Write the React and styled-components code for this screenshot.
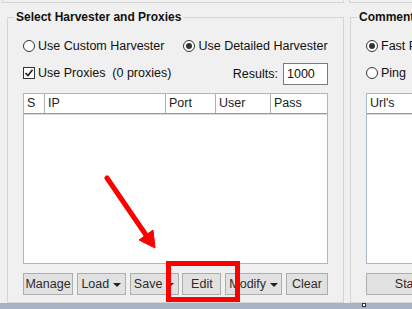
import React from 'react';
import styled, { createGlobalStyle } from 'styled-components';

const GlobalStyle = createGlobalStyle`
  html, body {
    margin: 0;
    padding: 0;
    background: #f0f0f0;
  }
  * {
    box-sizing: border-box;
  }
`;

const Window = styled.div`
  position: relative;
  width: 412px;
  height: 309px;
  overflow: hidden;
  display: flex;
  flex-direction: column;
  background: #f0f0f0;
  font-family: "Liberation Sans", Arial, sans-serif;
  font-size: 12.5px;
  color: #111;
`;

const TopStrip = styled.div`
  display: flex;
  height: 3px;
  flex: none;
`;

const LeftStub = styled.div`
  width: 342px;
  margin-left: 2px;
  border: 1px solid #d4d4d4;
  border-top: none;
`;

const RightStub = styled.div`
  flex: 1;
  margin-left: 5px;
  border-left: 1px solid #d4d4d4;
  border-bottom: 1px solid #d4d4d4;
`;

const Main = styled.div`
  flex: 1;
  display: flex;
  align-items: flex-start;
  padding: 7px 0 0 7px;
  overflow: hidden;
`;

const Group = styled.fieldset`
  flex: none;
  width: ${p => p.$width}px;
  height: 293px;
  margin: 0 0 0 ${p => p.$offset || 0}px;
  padding: 0 15px 0 15px;
  border: 1px solid #d5d5d5;
  display: flex;
  flex-direction: column;
  min-width: 0;
`;

const Legend = styled.legend`
  margin-left: -9px;
  padding: 0 2px;
  font-weight: bold;
  font-size: 12px;
  line-height: 14px;
  white-space: nowrap;
  color: #111;
`;

const OptionRow = styled.div`
  display: flex;
  align-items: center;
  height: ${p => p.$height || 14}px;
  margin-top: ${p => p.$top}px;
  gap: ${p => p.$gap || 0}px;
  white-space: pre;
`;

const Option = styled.label`
  display: flex;
  align-items: center;
  gap: 3px;
  line-height: 14px;
  margin-top: ${p => p.$shift || 0}px;
`;

const RadioDot = styled.span`
  width: 12px;
  height: 12px;
  border-radius: 50%;
  border: 1px solid #333;
  background: #fff;
  display: flex;
  align-items: center;
  justify-content: center;
  flex: none;
  &::after {
    content: '';
    width: 6px;
    height: 6px;
    border-radius: 50%;
    background: ${p => (p.$checked ? '#333' : 'transparent')};
  }
`;

const CheckBox = styled.span`
  width: 12px;
  height: 12px;
  border: 1px solid #333;
  background: #fff;
  flex: none;
  display: flex;
  align-items: center;
  justify-content: center;
`;

const Results = styled.div`
  margin-left: auto;
  display: flex;
  align-items: center;
  gap: 5px;
`;

const NumberBox = styled.div`
  width: 45px;
  height: 22px;
  border: 1px solid #7a7a7a;
  background: #fff;
  padding-left: 3px;
  line-height: 20px;
`;

const Table = styled.div`
  height: 171px;
  margin-top: 8px;
  border: 1px solid #a9b8c9;
  background: #fff;
  display: flex;
  flex-direction: column;
`;

const HeaderRow = styled.div`
  display: flex;
  height: 20px;
  border-bottom: 1px solid #9a9a9a;
  box-shadow: 0 1px 0 #d9d9d9;
`;

const HeaderCell = styled.div`
  width: ${p => (p.$w ? `${p.$w}px` : 'auto')};
  flex: ${p => (p.$w ? 'none' : 1)};
  border-right: 1px solid ${p => (p.$last ? 'transparent' : '#b0b0b0')};
  padding-left: 3px;
  line-height: 19px;
  white-space: nowrap;
  color: #222;
`;

const ButtonBar = styled.div`
  display: flex;
  justify-content: space-between;
  margin-top: 9px;
  height: 22px;
`;

const Button = styled.div`
  width: ${p => p.$w}px;
  flex: none;
  height: 22px;
  border: 1px solid #adadad;
  background: #e1e1e1;
  display: flex;
  align-items: center;
  justify-content: center;
  gap: 4px;
  color: #2b2b2b;
  white-space: nowrap;
`;

const Caret = styled.span`
  width: 0;
  height: 0;
  border-left: 4px solid transparent;
  border-right: 4px solid transparent;
  border-top: 4px solid #222;
  margin-top: 1px;
`;

const BottomBar = styled.div`
  flex: none;
  height: 6px;
  background: #a7b3c3;
  display: flex;
`;

const Grip = styled.span`
  width: 4px;
  height: 4px;
  margin-left: 362px;
  background: #fff;
  border: 1px solid #333;
`;

const Annotation = styled.svg`
  position: absolute;
  left: 0;
  top: 0;
  pointer-events: none;
`;

const Check = () => (
  <svg width="10" height="10" viewBox="0 0 10 10">
    <path d="M1.5 5 L4 7.5 L8.5 1.8" fill="none" stroke="#222" strokeWidth="1.6" />
  </svg>
);

const proxyColumns = [
  { name: 'S', w: 21 },
  { name: 'IP', w: 121 },
  { name: 'Port', w: 50 },
  { name: 'User', w: 55 },
  { name: 'Pass', last: true },
];

const proxyButtons = [
  { name: 'Manage', w: 50 },
  { name: 'Load', w: 49, menu: true },
  { name: 'Save', w: 49, menu: true },
  { name: 'Edit', w: 39 },
  { name: 'Modify', w: 57, menu: true },
  { name: 'Clear', w: 42 },
];

export default function App() {
  return (
    <>
      <GlobalStyle />
      <Window>
        <TopStrip>
          <LeftStub />
          <RightStub />
        </TopStrip>

        <Main>
          <Group $width={337}>
            <Legend>Select Harvester and Proxies</Legend>
            <OptionRow $top={15} $gap={19}>
              <Option><RadioDot />Use Custom Harvester</Option>
              <Option><RadioDot $checked />Use Detailed Harvester</Option>
            </OptionRow>
            <OptionRow $top={10} $height={22}>
              <Option $shift={-3}><CheckBox><Check /></CheckBox>Use Proxies  (0 proxies)</Option>
              <Results>
                Results:
                <NumberBox>1000</NumberBox>
              </Results>
            </OptionRow>
            <Table>
              <HeaderRow>
                {proxyColumns.map(col => (
                  <HeaderCell key={col.name} $w={col.w} $last={col.last}>{col.name}</HeaderCell>
                ))}
              </HeaderRow>
            </Table>
            <ButtonBar>
              {proxyButtons.map(btn => (
                <Button key={btn.name} $w={btn.w}>
                  {btn.name}
                  {btn.menu && <Caret />}
                </Button>
              ))}
            </ButtonBar>
          </Group>

          <Group $width={130} $offset={6}>
            <Legend>Comment Posting</Legend>
            <OptionRow $top={15}>
              <Option><RadioDot $checked />Fast Poster</Option>
            </OptionRow>
            <OptionRow $top={10} $height={22}>
              <Option $shift={-3}><RadioDot />Ping</Option>
            </OptionRow>
            <Table>
              <HeaderRow>
                <HeaderCell $last>Url's</HeaderCell>
              </HeaderRow>
            </Table>
            <ButtonBar>
              <Button $w={84}>Start</Button>
            </ButtonBar>
          </Group>
        </Main>

        <BottomBar>
          <Grip />
        </BottomBar>

        <Annotation width="412" height="309" viewBox="0 0 412 309">
          <line x1="107" y1="178" x2="146" y2="235" stroke="#ff0000" strokeWidth="5" strokeLinecap="round" />
          <polygon points="155,248 139,240 153,230" fill="#ff0000" stroke="#ff0000" strokeWidth="1" strokeLinejoin="round" />
          <rect x="168.5" y="263.5" width="69" height="36" fill="none" stroke="#ff0000" strokeWidth="5" />
        </Annotation>
      </Window>
    </>
  );
}
